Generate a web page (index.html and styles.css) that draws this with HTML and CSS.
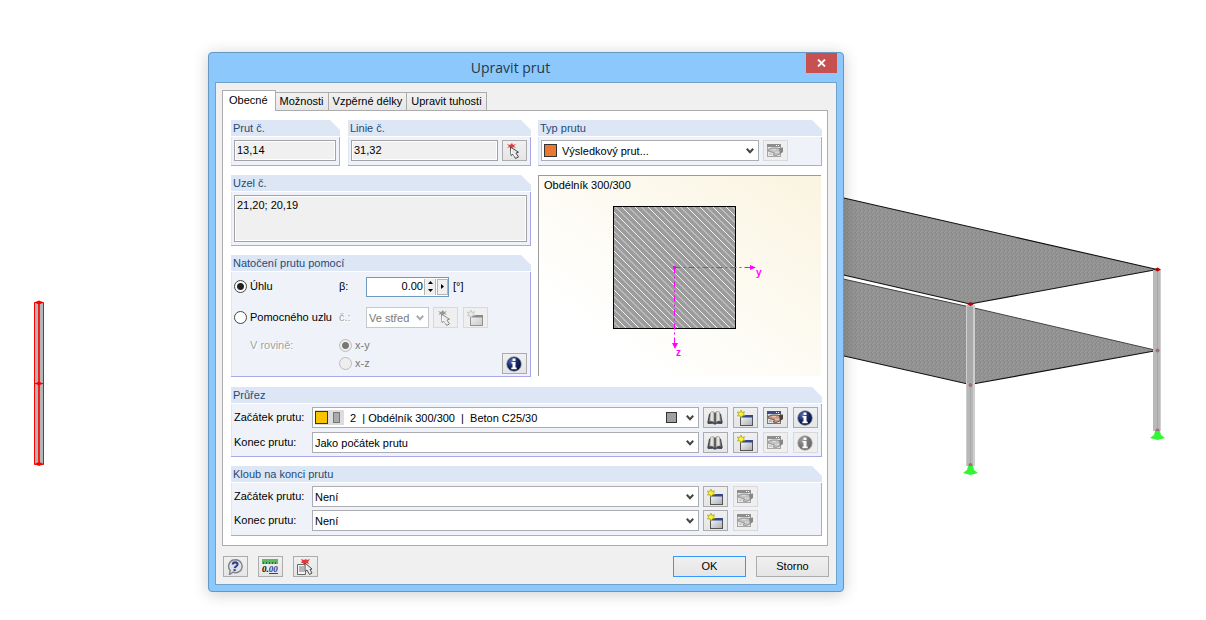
FILE: index.html
```html
<!DOCTYPE html>
<html lang="cs">
<head>
<meta charset="utf-8">
<title>Upravit prut</title>
<link rel="stylesheet" href="styles.css">
</head>
<body>
<svg class="defs" width="0" height="0" aria-hidden="true">
  <defs>
    <linearGradient id="gWin" x1="0" y1="0" x2="1" y2="1"><stop offset="0" stop-color="#fafafa"/><stop offset="1" stop-color="#a9adb3"/></linearGradient>
    <radialGradient id="gInfo" cx=".35" cy=".3" r=".8"><stop offset="0" stop-color="#5a70b8"/><stop offset=".45" stop-color="#1a2b69"/><stop offset="1" stop-color="#03082c"/></radialGradient>
    <linearGradient id="gPage" x1="0" x2="1"><stop offset="0" stop-color="#8d8a86"/><stop offset=".5" stop-color="#f6f4f0"/><stop offset="1" stop-color="#8f8a84"/></linearGradient>
    <linearGradient id="gBack" x1="0" y1="1" x2="1" y2="0"><stop offset=".2" stop-color="#fff"/><stop offset="1" stop-color="#faf4e0"/></linearGradient>
    <pattern id="hatch" width="13" height="13" patternUnits="userSpaceOnUse">
      <rect width="13" height="13" fill="#9c9c9c"/>
      <path d="M-1-1 14 14" stroke="#f4f4f4" stroke-width="1"/>
      <path d="M5.500-1 20.500 14M-7.500-1 7.500 14" stroke="#dedede" stroke-width="1"/>
    </pattern>
    <pattern id="mesh" width="4" height="4" patternUnits="userSpaceOnUse">
      <rect width="4" height="4" fill="#929292"/>
      <path d="M0 0h1v1H0zM2 2h1v1H2zM1 3h1v1H1z" fill="#9c9c9c"/><path d="M3 0h1v1H3zM0 2h1v1H0z" fill="#888"/>
    </pattern>
  </defs>
  <symbol id="i-arrow" viewBox="0 0 16 16">
    <path d="M1 1l3 1 2-2 1 2 3-1-2 2 2 2-3-1-2 3-1-3-3 1 2-2z" fill="#e23c3c"/>
    <path d="M4.500 4l.5 8.500 2-1.500 2.500 4.500 3-1.500-2.500-4 2.500-.8z" fill="#e8e8e8" stroke="#4a4a4a" stroke-width="1"/>
    <path d="M5.500 6v5l1.500-1 2 3.500" fill="none" stroke="#fff"/>
  </symbol>
  <symbol id="i-edit" viewBox="0 0 16 16">
    <rect x=".5" y="1.500" width="13" height="12" fill="#dfe2e8" stroke="#777"/>
    <path d="M0 1h14v3H0z" fill="#34508f"/><path d="M9 2h1v1H9zM11 2h1v1h-1z" fill="#fff"/>
    <path d="M1 6.500l4-1.500h5l3 1 2 2-2 3-4 1.500-3-.5 1.500-2L1 8z" fill="#c99a80" stroke="#5c3f33" stroke-width=".8"/>
    <path d="M5 6.700h4M8 9.200h4" stroke="#f0d3bd"/><path d="M12 5l4-.5V9l-3 2z" fill="#484143"/>
    <path d="M2 11h3" stroke="#8c9099"/>
  </symbol>
  <symbol id="i-new" viewBox="0 0 16 16">
    <rect x="3.500" y="5.500" width="12" height="10" fill="url(#gWin)" stroke="#555"/>
    <path d="M3 5h13v2.500H3z" fill="#32488b"/>
    <path d="M4 0l1 2.500 2.500-.8-1 2.300 1.500 1.500-2.500.3L4 8 3 5.800.5 6 1.700 4 .3 2l2.500.5z" fill="#f8f03a" stroke="#a89f10" stroke-width=".7"/>
  </symbol>
  <symbol id="i-book" viewBox="0 0 16 16">
    <path d="M.3 12.500L2 4l1-.5L7 13l1-1 1 1 4-9.500 1 .5 1.700 8.500-1 1.500-5-.3-1 .8H7l-1-.8-5 .3z" fill="#3d4456"/>
    <path d="M2 11.500L3.500 2.500c1.500-1.300 3.300-1 4.300.2v10C6.500 11.300 4 10.800 2 11.500z" fill="url(#gPage)" stroke="#706d69" stroke-width=".5"/>
    <path d="M8.300 2.700c1-1.300 2.800-1.700 4.200-.7L14 11.300c-2-.5-4.300-.1-5.700 1.400z" fill="url(#gPage)" stroke="#706d69" stroke-width=".5"/>
    <path d="M8 3v10" stroke="#333"/>
  </symbol>
  <symbol id="i-info" viewBox="0 0 16 16">
    <circle cx="8" cy="8" r="7.300" fill="url(#gInfo)" stroke="#8790ab" stroke-width=".7"/>
    <path d="M6.500 2.500h3v2.500h-3zM5.500 6h4v5.500h1.200v1.700H5.300v-1.700h1.200V7.500h-1z" fill="#fff"/>
  </symbol>
  <symbol id="i-help" viewBox="0 0 16 16">
    <path d="M8 .8a6.500 6.500 0 1 1-2 12.400L2.500 15.500l.7-4A6.500 6.500 0 0 1 8 .8z" fill="#dfe2e6" stroke="#7d8289" stroke-width="1.400"/>
    <path d="M5.800 5.500C6 2.800 10.800 2.600 10.500 5.500 10.300 7.200 8 7.300 7.700 9.200" fill="none" stroke="#2b408e" stroke-width="2.100"/><path d="M6.500 10.200h2.200v1.900H6.500z" fill="#2b408e"/>
  </symbol>
  <symbol id="i-pick" viewBox="0 0 16 16">
    <path d="M.5 5.500h8v10h-8z" fill="#f5f5f5" stroke="#666"/><path d="M2 8h5M2 10h5M2 12h5" stroke="#777"/>
    <path d="M4 0l3 1 2-1 1 1 3-1-2 3 1 2-3-1-2 2-1-2-2 0 1-2z" fill="#e33b3b"/>
    <path d="M8 4v8.500l2-1.500 2.500 4.500 2.500-1.500-2-3.500 2-.5z" fill="#eee" stroke="#4a4a4a"/>
  </symbol>
  <symbol id="i-chev" viewBox="0 0 8 6"><path d="M.8.8L4 4.200 7.200.8" fill="none" stroke="currentColor" stroke-width="2"/></symbol>
</svg>

<main class="desktop">
  <svg class="scene" viewBox="0 0 1206 620" preserveAspectRatio="xMinYMin meet" role="img" aria-label="Model konstrukce">
    <path d="M800 269.500l170 37.500L1157 350.500 970 384.500 800 346z" fill="url(#mesh)"/>
    <path d="M800 269.500l170 37.500L1157 350.500" fill="none" stroke="#444" stroke-width="1"/>
    <path d="M800 346l170 38.500 187-34" fill="none" stroke="#111" stroke-width="1.200"/>
    <path d="M800 188l357 81.500L970 304 800 265z" fill="url(#mesh)"/>
    <path d="M800 265l170 39 187-34.500L800 188" fill="none" stroke="#111" stroke-width="1.100"/>
    <g fill="#b8b8b8">
      <path d="M966 305h9v161h-9z"/><path d="M1153 270h8v161h-8z"/>
      <path d="M966 307h9v76h-9z" fill="#a9a9a9"/>
      <path d="M973 305h2v161h-2zM1160 270h1v161h-1zM966 305h1v161h-1z" fill="#cecece"/>
      <path d="M970 305h1v161h-1zM1157 270h1v161h-1z" fill="#a9a9a9"/>
    </g>
    <g fill="#b40000"><path d="M967 304l3.500-2 3.500 2-3.500 2zM1154 269.500l3.500-2 3.500 2-3.500 2z"/></g>
    <g fill="#a07070"><circle cx="970.500" cy="385" r="2"/><circle cx="1157.500" cy="350.500" r="2"/><circle cx="970.500" cy="465" r="2"/><circle cx="1157.500" cy="430.500" r="2"/></g>
    <g fill="#34f534"><path d="M968 466h5l1 4 4 3-7.500 2-7.500-2 4-3zM1155 431h5l1 4 4 3-7.500 2-7.500-2 4-3z"/></g>
    <path d="M34.500 302.500h9v162h-9z" fill="#b5b5b5" stroke="#f00"/>
    <path d="M39 303v161" stroke="#f02020" stroke-width="2"/><path d="M35 383.500h8" stroke="#f00"/>
    <path d="M34 302.500l5-2 5 2-5 2zM35 383.500l4-2 4 2-4 2zM34 464l5-2 5 2-5 2z" fill="#f00"/>
  </svg>

  <section class="window" role="dialog" aria-labelledby="title">
    <header class="titlebar">
      <h1 id="title">Upravit prut</h1>
      <button class="close" type="button" aria-label="Zavřít"><svg width="9" height="8" viewBox="0 0 9 8"><path d="M1 .5l7 7M8 .5l-7 7" stroke="#fff" stroke-width="1.800"/></svg></button>
    </header>
    <form class="client">
      <div class="tabs" role="tablist">
        <button class="tab active" type="button" role="tab" aria-selected="true">Obecné</button>
        <button class="tab" type="button" role="tab">Možnosti</button>
        <button class="tab" type="button" role="tab">Vzpěrné délky</button>
        <button class="tab" type="button" role="tab">Upravit tuhosti</button>
      </div>
      <div class="panel">
        <div class="columns">
          <div class="numbers">
            <div class="group">
              <h2><label for="prut">Prut č.</label></h2>
              <div class="body line"><input id="prut" class="inset" value="13,14" readonly></div>
            </div>
            <div class="group">
              <h2><label for="linie">Linie č.</label></h2>
              <div class="body line"><input id="linie" class="inset" value="31,32" readonly>
                <button class="tool" type="button" aria-label="Vybrat linii"><svg><use href="#i-arrow"/></svg></button></div>
            </div>
          </div>
          <div class="group">
            <h2><label for="typ">Typ prutu</label></h2>
            <div class="body line">
              <div class="combo type"><select id="typ"><option>Výsledkový prut...</option></select><i class="swatch orange"></i><svg class="chev"><use href="#i-chev"/></svg></div>
              <button class="tool" type="button" disabled aria-label="Upravit typ"><svg><use href="#i-edit"/></svg></button>
              <span class="reserve"></span>
            </div>
          </div>
          <div class="stack">
            <div class="group">
              <h2><label for="uzel">Uzel č.</label></h2>
              <div class="body"><textarea id="uzel" class="inset" readonly>21,20; 20,19</textarea></div>
            </div>
            <div class="group">
              <h2>Natočení prutu pomocí</h2>
              <div class="body rotation">
                <div class="rot-row">
                  <label class="choice"><input type="radio" name="rot" checked>Úhlu</label>
                  <label for="beta">β:</label>
                  <div class="controls">
                    <div class="spin"><input id="beta" value="0.00">
                      <span class="steps"><button type="button" aria-label="Zvýšit"><svg width="5" height="3"><path d="M0 3L2.500 0 5 3z"/></svg></button><button type="button" aria-label="Snížit"><svg width="5" height="3"><path d="M0 0h5L2.500 3z"/></svg></button></span>
                      <button class="more" type="button" aria-label="Další"><svg width="3" height="5"><path d="M0 0l3 2.500L0 5z"/></svg></button></div>
                    <span>[°]</span>
                  </div>
                </div>
                <div class="rot-row">
                  <label class="choice"><input type="radio" name="rot">Pomocného uzlu</label>
                  <label class="off" for="cislo">č.:</label>
                  <div class="controls">
                    <div class="combo small"><select id="cislo" disabled><option>Ve střed</option></select><svg class="chev"><use href="#i-chev"/></svg></div>
                    <div class="tools">
                      <button class="tool" type="button" disabled aria-label="Vybrat uzel"><svg><use href="#i-arrow"/></svg></button>
                      <button class="tool" type="button" disabled aria-label="Nový uzel"><svg><use href="#i-new"/></svg></button>
                    </div>
                  </div>
                </div>
                <div class="rot-row plane">
                  <span class="off indent">V rovině:</span>
                  <label class="choice dim"><input type="radio" name="rovina" checked disabled>x-y</label>
                </div>
                <div class="rot-row last">
                  <span></span>
                  <label class="choice dim"><input type="radio" name="rovina" disabled>x-z</label>
                  <button class="tool" type="button" aria-label="Informace"><svg><use href="#i-info"/></svg></button>
                </div>
              </div>
            </div>
          </div>
          <div class="preview">
            <svg viewBox="0 0 282 200" preserveAspectRatio="xMinYMin slice" role="img" aria-label="Průřez Obdélník 300/300">
              <rect width="282" height="200" fill="url(#gBack)"/>
              <text x="5" y="13" class="caption">Obdélník 300/300</text>
              <rect x="74.500" y="30.500" width="122" height="122" fill="url(#hatch)" stroke="#000"/>
              <g stroke="#f0f" fill="none" stroke-dasharray="6 3 2 3"><path d="M135.500 91.500h76M135.500 91.500v76"/></g>
              <path d="M134 90h3v3h-3zM211 89l6 2.500-6 2.500zM133 167h6l-3 6z" fill="#f0f"/>
              <text x="217" y="100" class="axis">y</text><text x="137" y="180" class="axis">z</text>
            </svg>
          </div>
        </div>

        <div class="group">
          <h2>Průřez</h2>
          <div class="body rows">
            <div class="row"><label for="p1">Začátek prutu:</label>
              <div class="combo section"><select id="p1"><option>2&nbsp;&nbsp;|&nbsp;Obdélník 300/300&nbsp;&nbsp;|&nbsp;&nbsp;Beton C25/30</option></select><span class="chips"><i class="swatch yellow"></i><i class="bar"></i></span><i class="swatch gray"></i><svg class="chev"><use href="#i-chev"/></svg></div>
              <div class="tools">
                <button class="tool" type="button" aria-label="Knihovna"><svg><use href="#i-book"/></svg></button>
                <button class="tool" type="button" aria-label="Nový"><svg><use href="#i-new"/></svg></button>
                <button class="tool" type="button" aria-label="Upravit"><svg><use href="#i-edit"/></svg></button>
                <button class="tool" type="button" aria-label="Informace"><svg><use href="#i-info"/></svg></button>
              </div></div>
            <div class="row"><label for="p2">Konec prutu:</label>
              <div class="combo"><select id="p2"><option>Jako počátek prutu</option></select><svg class="chev"><use href="#i-chev"/></svg></div>
              <div class="tools">
                <button class="tool" type="button" aria-label="Knihovna"><svg><use href="#i-book"/></svg></button>
                <button class="tool" type="button" aria-label="Nový"><svg><use href="#i-new"/></svg></button>
                <button class="tool" type="button" disabled aria-label="Upravit"><svg><use href="#i-edit"/></svg></button>
                <button class="tool" type="button" disabled aria-label="Informace"><svg><use href="#i-info"/></svg></button>
              </div></div>
          </div>
        </div>

        <div class="group">
          <h2>Kloub na konci prutu</h2>
          <div class="body rows tight">
            <div class="row"><label for="k1">Začátek prutu:</label>
              <div class="combo"><select id="k1"><option>Není</option></select><svg class="chev"><use href="#i-chev"/></svg></div>
              <div class="tools">
                <button class="tool" type="button" aria-label="Nový"><svg><use href="#i-new"/></svg></button>
                <button class="tool" type="button" disabled aria-label="Upravit"><svg><use href="#i-edit"/></svg></button>
              </div></div>
            <div class="row"><label for="k2">Konec prutu:</label>
              <div class="combo"><select id="k2"><option>Není</option></select><svg class="chev"><use href="#i-chev"/></svg></div>
              <div class="tools">
                <button class="tool" type="button" aria-label="Nový"><svg><use href="#i-new"/></svg></button>
                <button class="tool" type="button" disabled aria-label="Upravit"><svg><use href="#i-edit"/></svg></button>
              </div></div>
          </div>
        </div>
      </div>

      <footer class="footer">
        <button class="tool" type="button" aria-label="Nápověda"><svg><use href="#i-help"/></svg></button>
        <button class="tool units" type="button" aria-label="Jednotky"><svg viewBox="0 0 16 16"><path d="M0 0h16v5H0z" fill="#62b862"/><path d="M1.500 3v2M4.500 3v2M7.500 3v2M10.500 3v2M13.500 3v2" stroke="#2f6a2f"/><text x="0" y="13">0.<tspan fill="#26408f">00</tspan></text><path d="M7 14.500h9" stroke="#26408f"/></svg></button>
        <button class="tool" type="button" aria-label="Převzít z výběru"><svg><use href="#i-pick"/></svg></button>
        <span class="push"></span>
        <button class="action default" type="submit">OK</button>
        <button class="action" type="button">Storno</button>
      </footer>
    </form>
  </section>
</main>
</body>
</html>
```
FILE: styles.css
```css
* { box-sizing: border-box; }
body { margin: 0; background: #fff; color: #000; font: 11px/13px "Liberation Sans", Arial, sans-serif; }
button, input, select, textarea { font: inherit; color: inherit; margin: 0; border-radius: 0; outline: 0; }
.defs { position: absolute; }
h1, h2 { margin: 0; font-weight: normal; }

.desktop { position: relative; min-height: 100vh; padding: 52px 0 28px 208px; overflow: hidden; }
.scene { position: absolute; left: 0; top: 0; width: 100%; }

.window { position: relative; max-width: 636px; padding: 0 6px 6px; background: #8cc8fb; border: 1px solid #6499c4; border-radius: 4px; box-shadow: 0 2px 16px rgba(0, 0, 0, .2); }
.titlebar { display: grid; grid-template-columns: 1fr 31px; align-items: start; height: 29px; }
.titlebar h1 { text-align: center; font: 14px/29px "Open Sans", "Noto Sans", sans-serif; color: #26384a; }
.close { display: grid; place-items: center; height: 20px; padding: 0; border: 0; background: #c75050; }
.client { padding: 7px 7px 7px 6px; background: #f0f0f0; border: 1px solid #6fa3cc; }

.tabs { display: flex; align-items: flex-end; height: 21px; }
.tab { height: 19px; margin-left: -1px; padding: 0 4px; background: linear-gradient(#f1f1f1, #e7e7e7); border: 1px solid #acacac; }
.tab.active { position: relative; height: 21px; margin-left: 0; padding: 0 7px 2px 6px; background: #fff; border-bottom: 0; z-index: 1; }
.panel { display: flex; flex-direction: column; gap: 9px; margin: -1px 1px 10px 0; padding: 9px 5px 9px 8px; background: #fff; border: 1px solid #acacac; }

.columns { display: grid; grid-template-columns: 300fr 284fr; column-gap: 7px; row-gap: 9px; padding-bottom: 1px; }
.numbers { display: grid; grid-template-columns: 109fr 183fr; gap: 8px; }
.stack { display: flex; flex-direction: column; gap: 9px; }

.group { display: flex; flex-direction: column; min-width: 0; background: linear-gradient(#a9a7ea, #a9a7ea) right bottom / 1px calc(100% - 10px) no-repeat; border-bottom: 1px solid #a9a7ea; padding-right: 1px; }
.group h2 { height: 17px; margin-right: -1px; padding: 1px 2px 2px; background: #dce6f4; border-bottom: 1px solid #fff; color: #1f4a77; font-size: 11px; line-height: 14px; clip-path: polygon(0 0, calc(100% - 10px) 0, 100% 10px, 100% 100%, 0 100%); }
.body { flex: 1; padding: 3px; background: #eff3f9; border-left: 1px solid #dce6f4; padding-left: 2px; }
.line { display: flex; gap: 4px; padding-bottom: 4px; }
.reserve { width: 26px; }

.inset { display: block; width: 100%; min-width: 0; height: 21px; padding: 0 2px 1px; background: #f0f0f0; border: 1px solid #a0a2a8; box-shadow: inset 0 0 0 1px #fff; }
textarea.inset { height: 47px; padding: 3px 2px; resize: none; }

.combo { display: grid; align-items: center; flex: 1; min-width: 0; height: 21px; background: #fff; border: 1px solid #abadb3; color: #444; }
.combo > * { grid-area: 1 / 1; }
.combo select { width: 100%; height: 19px; padding: 1px 20px 0 2px; appearance: none; background: none; border: 0; color: #000; opacity: 1; }
.chev { justify-self: end; width: 8px; height: 6px; margin-right: 4px; pointer-events: none; }
.combo.type select { padding-left: 20px; }
.combo.small { flex: none; width: 63px; border-color: #c8c8c8; color: #aaa; }
.combo.small select { color: #777; padding-right: 12px; }
.swatch { width: 13px; height: 13px; margin-left: 2px; border: 1px solid #333; pointer-events: none; }
.orange { background: #e97932; }
.yellow { background: #f8c300; margin: 0; }
.gray { justify-self: end; width: 11px; height: 11px; margin-right: 21px; background: #a0a0a0; }
.combo.section select { padding-left: 37px; }
.chips { display: flex; align-items: center; gap: 5px; justify-self: start; width: 29px; height: 15px; margin-left: 2px; background: #ddd; pointer-events: none; }
.bar { width: 7px; height: 11px; background: #aaa; border: 1px solid #777; }

.tool { display: grid; place-items: center; flex: none; width: 25px; height: 21px; padding: 0 1px 0 0; background: linear-gradient(#f0f0f0, #e5e5e5); border: 1px solid #acacac; }
.tool svg { width: 16px; height: 16px; }
.tool:disabled { background: #efefef; border-color: #d9d9d9; }
.tool:disabled svg { filter: grayscale(1); opacity: .6; }

.rotation { display: flex; flex-direction: column; gap: 10px; padding: 4px 3px 2px 2px; }
.rot-row { display: grid; grid-template-columns: 105px 27px 1fr; align-items: center; height: 21px; }
.rot-row.plane { height: 15px; }
.rot-row.last { margin-top: -10px; }
.rot-row.last .tool { justify-self: end; }
.choice { display: flex; align-items: center; gap: 3px; white-space: nowrap; }
.choice input { appearance: none; flex: none; width: 13px; height: 13px; border: 1px solid #444; border-radius: 50%; background: #fff; }
.choice input:checked { background: radial-gradient(circle, #222 3px, #fff 4px); }
.choice.dim { color: #777; }
.choice.dim input { border-color: #bcbcbc; background: #eee; }
.choice.dim input:checked { background: radial-gradient(circle, #777 3px, #eee 4px); }
.off { color: #a3a3a3; text-shadow: 1px 1px #fff; }
.indent { padding-left: 16px; }
.controls { display: flex; align-items: center; gap: 4px; }
.spin { display: flex; gap: 1px; width: 83px; height: 20px; padding: 1px 0; background: #fff; border: 1px solid #6d9abd; }
.spin input { flex: 1; min-width: 0; padding: 0; border: 0; text-align: right; }
.spin button { display: grid; place-items: center; padding: 0; background: #f0f0f0; border: 1px solid #b5b5b5; }
.spin .steps { display: grid; grid-template-rows: 1fr 1fr; width: 12px; }
.spin .steps button { border-width: 0 1px; }
.spin .more { width: 11px; }

.preview { border: solid #9b9b9b; border-width: 1px 0 0 1px; margin-right: 1px; margin-bottom: 1px; }
.preview svg { display: block; width: 100%; height: 100%; }
.caption { font-size: 11px; }
.axis { font-size: 10px; font-weight: bold; fill: #f0f; }

.rows { display: flex; flex-direction: column; gap: 4px; }
.rows.tight { gap: 3px; padding-bottom: 4px; }
.row { display: grid; grid-template-columns: 74px 1fr 115px; column-gap: 4px; align-items: center; }
.tools { display: flex; gap: 5px; }

.footer { display: flex; gap: 10px; padding-left: 1px; }
.push { flex: 1; }
.units text { font: italic bold 9px "Liberation Serif", serif; }
.action { width: 73px; height: 21px; padding: 0; background: linear-gradient(#f0f0f0, #e5e5e5); border: 1px solid #acacac; }
.action.default { border-color: #3399ff; }
```
